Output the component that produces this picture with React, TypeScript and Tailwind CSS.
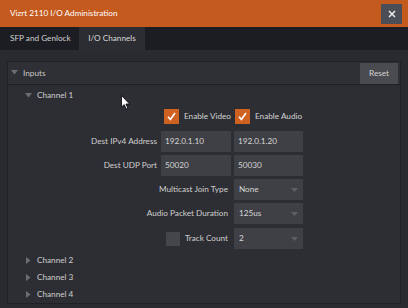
import React from "react";

const font = { fontFamily: 'Lato, "Noto Sans", Arial, sans-serif' };

function Caret({ open }: { open: boolean }) {
  return open ? (
    <svg width="7" height="5" viewBox="0 0 7 5" className="shrink-0">
      <path d="M0 0 L7 0 L3.5 4.5 Z" fill="#6b6d73" />
    </svg>
  ) : (
    <svg width="5" height="7" viewBox="0 0 5 7" className="shrink-0">
      <path d="M0 0 L4.5 3.5 L0 7 Z" fill="#6b6d73" />
    </svg>
  );
}

function Check() {
  return (
    <div className="w-[15px] h-[15px] bg-[#cf6221] flex items-center justify-center shrink-0">
      <svg width="11" height="11" viewBox="0 0 11 11">
        <path d="M2 5.8 L4.4 8.4 L9 2" stroke="#fff" strokeWidth="1.6" fill="none" />
      </svg>
    </div>
  );
}

function Field({ value }: { value: string }) {
  return (
    <div className="h-[21px] bg-[#3f4045] flex items-center pl-[4px] text-[#d6d6d6]">
      {value}
    </div>
  );
}

function Select({ value }: { value: string }) {
  return (
    <div className="h-[21px] bg-[#3f4045] flex items-center justify-between pl-[5px] pr-[5px] text-[#d6d6d6]">
      <span>{value}</span>
      <svg width="7" height="4" viewBox="0 0 7 4">
        <path d="M0 0 L7 0 L3.5 4 Z" fill="#5d5f64" />
      </svg>
    </div>
  );
}

export default function App() {
  return (
    <div className="w-[408px] h-[308px] bg-[#2a2b30] relative overflow-hidden text-[#d4d4d4] text-[8.2px] whitespace-nowrap" style={font}>
      {/* title bar */}
      <div className="h-[27px] bg-[#c55a1f] flex items-center justify-between pl-[10px] pr-[6px]">
        <span className="text-white">Vizrt 2110 I/O Administration</span>
        <div className="w-[21px] h-[20px] bg-[#4b4e56] flex items-center justify-center">
          <svg width="8" height="8" viewBox="0 0 8 8">
            <path d="M1 1 L7 7 M7 1 L1 7" stroke="#e6e6e6" strokeWidth="1.6" />
          </svg>
        </div>
      </div>
      {/* tabs */}
      <div className="h-[23px] bg-[#1c1d22] flex items-stretch">
        <div className="w-[79px] flex items-center pl-[10px] text-[#d0d0d0]">SFP and Genlock</div>
        <div className="w-[66px] flex items-center justify-center bg-[#2c2d32] text-[#d8d8d8]">I/O Channels</div>
      </div>
      {/* content */}
      <div className="pt-[11px] pl-[7px] pr-[7px]">
        <div className="border border-[#202126] bg-[#2d2e33] h-[243px]">
          <div className="h-[23px] bg-[#2f3035] border-b border-[#1f2024] flex items-center justify-between pl-[3px] pr-[2px]">
            <div className="flex items-center gap-[5px]">
              <Caret open />
              <span className="text-[#c8c8c8]">Inputs</span>
            </div>
            <div className="w-[38px] h-[21px] bg-[#4a4b50] flex items-center justify-center text-[#d4d4d4]">
              Reset
            </div>
          </div>
          <div className="h-[19px] mt-[1px] flex items-center pl-[17px] gap-[5px]">
            <Caret open />
            <span className="text-[#cfcfcf]">Channel 1</span>
          </div>
          <div className="grid grid-cols-[118px_70px_69px] gap-x-[3px] gap-y-[3px] ml-[32px] mt-[1px]">
            <div />
            <div className="h-[21px] flex items-center pl-[3px] gap-[5px] mb-[1px]">
              <Check />
              <span className="text-[#d4d4d4]">Enable Video</span>
            </div>
            <div className="h-[21px] flex items-center pl-[1px] gap-[5px] mb-[1px]">
              <Check />
              <span className="text-[#d4d4d4]">Enable Audio</span>
            </div>

            <div className="h-[21px] flex items-center justify-end pr-[1px] text-[#cfcfcf]">Dest IPv4 Address</div>
            <Field value="192.0.1.10" />
            <Field value="192.0.1.20" />

            <div className="h-[21px] flex items-center justify-end pr-[1px] text-[#cfcfcf]">Dest UDP Port</div>
            <Field value="50020" />
            <Field value="50030" />

            <div className="col-span-2 h-[21px] flex items-center justify-end pr-[3px] text-[#cfcfcf]">Multicast Join Type</div>
            <Select value="None" />

            <div className="col-span-2 h-[21px] flex items-center justify-end pr-[3px] text-[#cfcfcf]">Audio Packet Duration</div>
            <Select value="125us" />

            <div className="col-span-2 h-[21px] flex items-center justify-end pr-[3px] gap-[5px] text-[#cfcfcf] mt-[1px]">
              <div className="w-[14px] h-[14px] bg-[#45464b]" />
              <span>Track Count</span>
            </div>
            <div className="mt-[1px]">
              <Select value="2" />
            </div>
          </div>
          <div className="mt-[3px]">
            {["Channel 2", "Channel 3", "Channel 4"].map((c) => (
              <div key={c} className="h-[17px] flex items-center pl-[18px] gap-[6px]">
                <Caret open={false} />
                <span className="text-[#cfcfcf]">{c}</span>
              </div>
            ))}
          </div>
        </div>
      </div>
      {/* mouse cursor */}
      <svg className="absolute left-[121px] top-[95px]" width="10" height="15" viewBox="0 0 10 15">
        <path d="M0.5 0.5 L0.5 12 L3.2 9.6 L5.2 14 L6.8 13.3 L4.9 9 L8.6 9 Z" fill="#fff" stroke="#000" strokeWidth="0.8" />
      </svg>
    </div>
  );
}
